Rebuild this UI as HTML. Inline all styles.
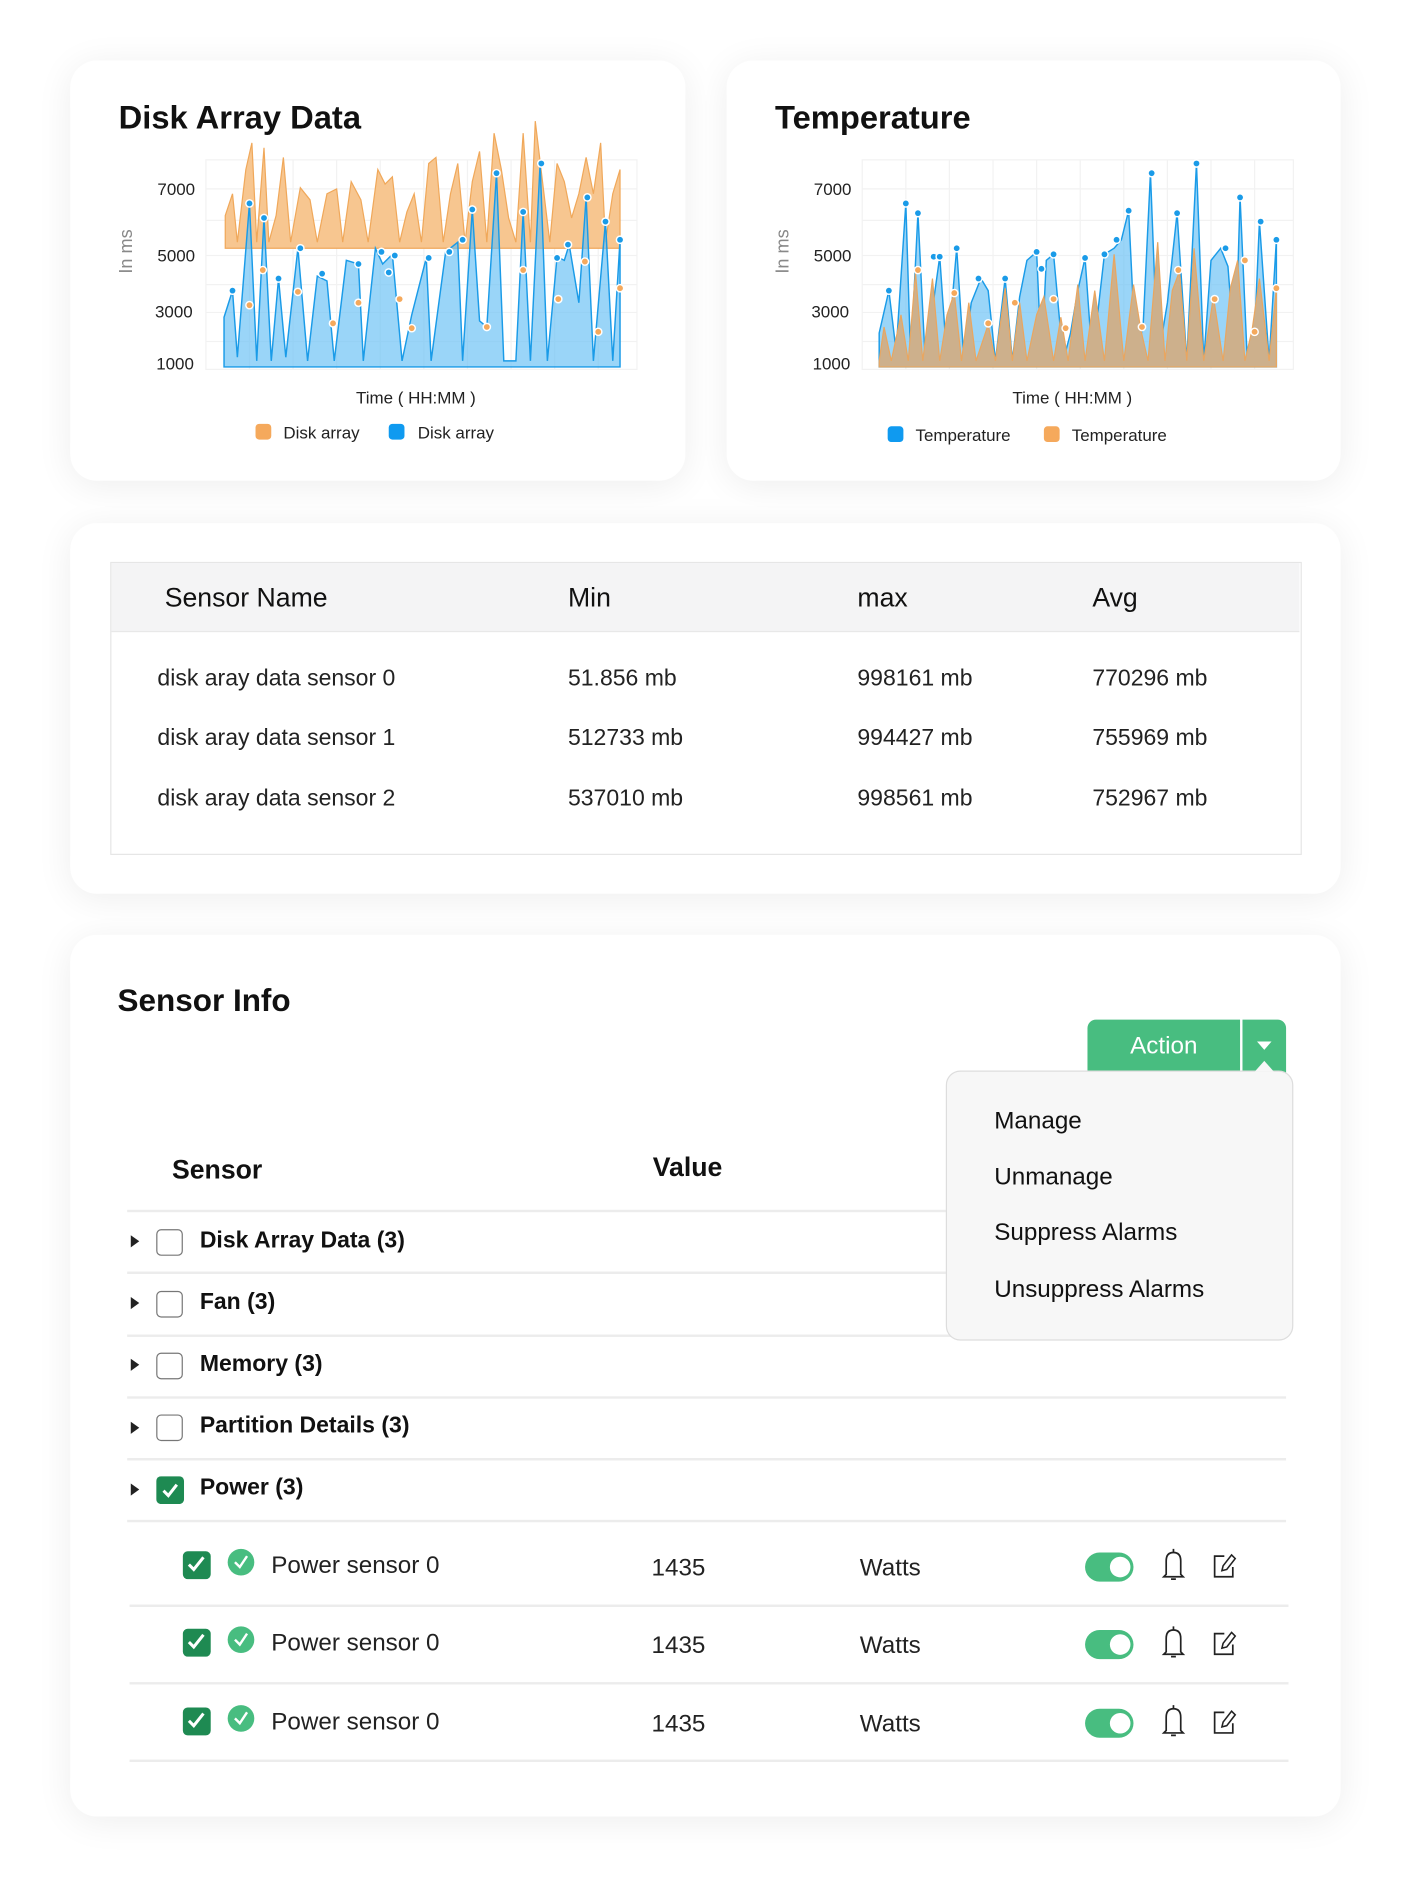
<!DOCTYPE html>
<html><head><meta charset="utf-8">
<style>
html,body{margin:0;padding:0;background:#fff;}
body{width:1412px;height:1898px;overflow:hidden;font-family:"Liberation Sans",sans-serif;color:#111;}
#w{position:absolute;left:0;top:0;width:1166px;height:1568px;transform:scale(1.2110);transform-origin:0 0;}
.card{position:absolute;background:#fff;border-radius:22px;box-shadow:0 4px 30px rgba(0,0,0,0.07);}
.abs{position:absolute;white-space:nowrap;}
.t{font-size:19px;color:#222;}
.rowline{position:absolute;left:105px;width:957px;height:2px;background:#ececec;}
.cb{position:absolute;width:20px;height:20px;border:1.5px solid #777;border-radius:4px;background:#fff;}
.caret{position:absolute;width:0;height:0;border-left:7px solid #222;border-top:5px solid transparent;border-bottom:5px solid transparent;}
.grp{position:absolute;font-size:19px;font-weight:bold;color:#111;}
</style></head><body>
<div id="w">

<div class="card" style="left:58px;top:50px;width:508px;height:347px;"></div>
<div class="card" style="left:600px;top:50px;width:507px;height:347px;"></div>
<div class="card" style="left:58px;top:432px;width:1049px;height:306px;"></div>
<div class="card" style="left:58px;top:772px;width:1049px;height:728px;"></div>

<div class="abs" style="left:98px;top:82px;font-size:27px;font-weight:bold;">Disk Array Data</div>
<div class="abs" style="left:640px;top:82px;font-size:27px;font-weight:bold;">Temperature</div>

<svg class="abs" style="left:0;top:0" width="1166" height="420">
<g stroke="#f2f2f2" stroke-width="1" fill="none">
<rect x="170" y="132" width="356" height="173"/>
<line x1="170" y1="156" x2="526" y2="156"/><line x1="170" y1="182" x2="526" y2="182"/><line x1="170" y1="211" x2="526" y2="211"/><line x1="170" y1="235" x2="526" y2="235"/><line x1="170" y1="258" x2="526" y2="258"/><line x1="170" y1="282" x2="526" y2="282"/>
<line x1="206" y1="132" x2="206" y2="305"/><line x1="242" y1="132" x2="242" y2="305"/><line x1="278" y1="132" x2="278" y2="305"/><line x1="314" y1="132" x2="314" y2="305"/><line x1="350" y1="132" x2="350" y2="305"/><line x1="386" y1="132" x2="386" y2="305"/><line x1="422" y1="132" x2="422" y2="305"/><line x1="458" y1="132" x2="458" y2="305"/><line x1="494" y1="132" x2="494" y2="305"/>
<rect x="712" y="132" width="356" height="173"/>
<line x1="712" y1="156" x2="1068" y2="156"/><line x1="712" y1="182" x2="1068" y2="182"/><line x1="712" y1="211" x2="1068" y2="211"/><line x1="712" y1="235" x2="1068" y2="235"/><line x1="712" y1="258" x2="1068" y2="258"/><line x1="712" y1="282" x2="1068" y2="282"/>
<line x1="748" y1="132" x2="748" y2="305"/><line x1="784" y1="132" x2="784" y2="305"/><line x1="820" y1="132" x2="820" y2="305"/><line x1="856" y1="132" x2="856" y2="305"/><line x1="892" y1="132" x2="892" y2="305"/><line x1="928" y1="132" x2="928" y2="305"/><line x1="964" y1="132" x2="964" y2="305"/><line x1="1000" y1="132" x2="1000" y2="305"/><line x1="1036" y1="132" x2="1036" y2="305"/>
</g>
<polygon fill="#f7c690" stroke="#f0a85a" stroke-width="1" points="186,205 186,178 192,160 196,200 203,140 208,118 212,200 218,122 222,200 228,178 234,130 240,200 248,155 256,165 262,200 270,160 278,156 283,200 290,150 298,165 304,200 312,140 318,152 324,146 330,200 336,175 342,160 348,200 354,135 360,130 366,200 372,160 378,135 384,200 390,150 396,125 402,200 408,110 414,140 420,180 426,200 432,110 438,200 442,100 448,150 454,200 460,135 466,150 472,180 478,160 484,130 490,160 496,118 500,200 506,160 512,140 512,205"/>
<polygon fill="rgba(100,190,245,0.65)" stroke="#1a9be8" stroke-width="1.2" points="185,303 185,262 192,240 196,295 206,168 212,298 218,180 224,298 230,230 236,295 246,205 254,298 262,228 270,232 276,298 286,215 296,218 300,298 310,205 316,218 324,210 332,298 340,260 352,213 356,298 368,208 378,200 382,298 390,173 396,265 402,270 410,143 416,298 426,298 432,175 438,298 446,135 452,298 460,212 466,215 470,202 478,250 484,163 490,298 500,183 506,298 512,198 512,303"/>
<g fill="#1a9be8" stroke="#fff" stroke-width="1.2">
<circle cx="192" cy="240" r="3"/><circle cx="206" cy="168" r="3"/><circle cx="218" cy="180" r="3"/><circle cx="230" cy="230" r="3"/><circle cx="248" cy="205" r="3"/><circle cx="266" cy="226" r="3"/><circle cx="296" cy="218" r="3"/><circle cx="315" cy="208" r="3"/><circle cx="321" cy="225" r="3"/><circle cx="326" cy="211" r="3"/><circle cx="354" cy="213" r="3"/><circle cx="371" cy="208" r="3"/><circle cx="382" cy="198" r="3"/><circle cx="390" cy="173" r="3"/><circle cx="410" cy="143" r="3"/><circle cx="432" cy="175" r="3"/><circle cx="447" cy="135" r="3"/><circle cx="460" cy="213" r="3"/><circle cx="469" cy="202" r="3"/><circle cx="485" cy="163" r="3"/><circle cx="500" cy="183" r="3"/><circle cx="512" cy="198" r="3"/>
</g>
<g fill="#f5a95c" stroke="#fff" stroke-width="1.2">
<circle cx="217" cy="223" r="3"/><circle cx="206" cy="252" r="3"/><circle cx="246" cy="241" r="3"/><circle cx="275" cy="267" r="3"/><circle cx="296" cy="250" r="3"/><circle cx="330" cy="247" r="3"/><circle cx="340" cy="271" r="3"/><circle cx="402" cy="270" r="3"/><circle cx="432" cy="223" r="3"/><circle cx="461" cy="247" r="3"/><circle cx="483" cy="216" r="3"/><circle cx="494" cy="274" r="3"/><circle cx="512" cy="238" r="3"/>
</g>
<polygon fill="rgba(100,190,245,0.65)" stroke="#1a9be8" stroke-width="1.2" points="726,303 726,275 734,240 740,290 748,168 752,298 758,176 764,298 770,255 776,212 782,298 790,205 796,298 802,250 810,230 816,240 822,298 830,230 836,298 842,245 848,215 856,208 860,298 864,215 870,210 878,298 884,275 890,240 896,213 902,298 912,210 920,205 926,198 932,174 938,298 944,268 950,143 956,298 964,250 972,176 980,298 988,135 994,298 1000,215 1008,205 1014,220 1020,298 1024,163 1030,298 1036,275 1040,183 1048,298 1054,198 1054,303"/>
<polygon fill="#cdb08c" stroke="#e9a660" stroke-width="1" points="726,303 726,298 730,270 736,298 744,260 750,298 756,225 762,298 770,230 776,298 782,260 788,242 794,298 800,250 806,298 816,268 822,298 830,238 836,298 842,250 848,298 856,260 862,245 870,298 876,262 882,298 890,235 896,298 904,240 912,298 920,210 928,298 936,235 942,272 948,298 956,200 962,298 968,240 974,224 980,298 986,205 994,298 1002,245 1010,298 1016,238 1022,215 1028,298 1034,272 1040,230 1048,298 1054,238 1054,303"/>
<g fill="#1a9be8" stroke="#fff" stroke-width="1.2">
<circle cx="734" cy="240" r="3"/><circle cx="748" cy="168" r="3"/><circle cx="758" cy="176" r="3"/><circle cx="771" cy="212" r="3"/><circle cx="776" cy="212" r="3"/><circle cx="790" cy="205" r="3"/><circle cx="808" cy="230" r="3"/><circle cx="830" cy="230" r="3"/><circle cx="856" cy="208" r="3"/><circle cx="860" cy="222" r="3"/><circle cx="870" cy="210" r="3"/><circle cx="896" cy="213" r="3"/><circle cx="912" cy="210" r="3"/><circle cx="922" cy="198" r="3"/><circle cx="932" cy="174" r="3"/><circle cx="951" cy="143" r="3"/><circle cx="972" cy="176" r="3"/><circle cx="988" cy="135" r="3"/><circle cx="1012" cy="205" r="3"/><circle cx="1024" cy="163" r="3"/><circle cx="1041" cy="183" r="3"/><circle cx="1054" cy="198" r="3"/>
</g>
<g fill="#f5a95c" stroke="#fff" stroke-width="1.2">
<circle cx="758" cy="223" r="3"/><circle cx="788" cy="242" r="3"/><circle cx="816" cy="267" r="3"/><circle cx="838" cy="250" r="3"/><circle cx="870" cy="247" r="3"/><circle cx="880" cy="271" r="3"/><circle cx="943" cy="270" r="3"/><circle cx="973" cy="223" r="3"/><circle cx="1003" cy="247" r="3"/><circle cx="1028" cy="215" r="3"/><circle cx="1036" cy="274" r="3"/><circle cx="1054" cy="238" r="3"/>
</g>
<g font-family="Liberation Sans,sans-serif" font-size="14" fill="#222">
<text x="130" y="161">7000</text><text x="130" y="216">5000</text><text x="128" y="262">3000</text><text x="129" y="305">1000</text>
<text x="672" y="161">7000</text><text x="672" y="216">5000</text><text x="670" y="262">3000</text><text x="671" y="305">1000</text>
<text x="294" y="333">Time ( HH:MM )</text><text x="836" y="333">Time ( HH:MM )</text>
<text x="234" y="362">Disk array</text><text x="345" y="362">Disk array</text>
<text x="756" y="364">Temperature</text><text x="885" y="364">Temperature</text>
</g>
<g font-family="Liberation Sans,sans-serif" font-size="15" fill="#888">
<text transform="translate(109,226) rotate(-90)">In ms</text>
<text transform="translate(651,226) rotate(-90)">In ms</text>
</g>
<rect x="211" y="350" width="13" height="13" rx="3" fill="#f5a95c"/>
<rect x="321" y="350" width="13" height="13" rx="3" fill="#0f9af0"/>
<rect x="733" y="352" width="13" height="13" rx="3" fill="#0f9af0"/>
<rect x="862" y="352" width="13" height="13" rx="3" fill="#f5a95c"/>
</svg>

<div class="abs" style="left:91px;top:464px;width:982px;height:240px;border:1px solid #e6e6e6;"></div>
<div class="abs" style="left:92px;top:465px;width:981px;height:56px;background:#f4f4f5;border-bottom:1px solid #e8e8e8;"></div>
<div class="abs" style="left:136px;top:481px;font-size:22px;">Sensor Name</div>
<div class="abs" style="left:469px;top:481px;font-size:22px;">Min</div>
<div class="abs" style="left:708px;top:481px;font-size:22px;">max</div>
<div class="abs" style="left:902px;top:481px;font-size:22px;">Avg</div>
<div class="abs t" style="left:130px;top:550px;">disk aray data sensor 0</div>
<div class="abs t" style="left:469px;top:550px;">51.856 mb</div>
<div class="abs t" style="left:708px;top:550px;">998161 mb</div>
<div class="abs t" style="left:902px;top:550px;">770296 mb</div>
<div class="abs t" style="left:130px;top:599px;">disk aray data sensor 1</div>
<div class="abs t" style="left:469px;top:599px;">512733 mb</div>
<div class="abs t" style="left:708px;top:599px;">994427 mb</div>
<div class="abs t" style="left:902px;top:599px;">755969 mb</div>
<div class="abs t" style="left:130px;top:649px;">disk aray data sensor 2</div>
<div class="abs t" style="left:469px;top:649px;">537010 mb</div>
<div class="abs t" style="left:708px;top:649px;">998561 mb</div>
<div class="abs t" style="left:902px;top:649px;">752967 mb</div>

<div class="abs" style="left:97px;top:811px;font-size:26px;font-weight:bold;">Sensor Info</div>
<div class="abs" style="left:142px;top:953px;font-size:22px;font-weight:bold;">Sensor</div>
<div class="abs" style="left:539px;top:951px;font-size:22px;font-weight:bold;">Value</div>

<div class="rowline" style="top:999px"></div>
<div class="rowline" style="top:1050px"></div>
<div class="rowline" style="top:1102px"></div>
<div class="rowline" style="top:1153px"></div>
<div class="rowline" style="top:1204px"></div>
<div class="rowline" style="top:1255px"></div>
<div class="rowline" style="top:1325px;left:107px;width:957px"></div>
<div class="rowline" style="top:1389px;left:107px;width:957px"></div>
<div class="rowline" style="top:1453px;left:107px;width:957px"></div>

<div class="caret" style="left:108px;top:1020px"></div><div class="cb" style="left:129px;top:1015px"></div><div class="grp" style="left:165px;top:1014px">Disk Array Data (3)</div>
<div class="caret" style="left:108px;top:1071px"></div><div class="cb" style="left:129px;top:1066px"></div><div class="grp" style="left:165px;top:1065px">Fan (3)</div>
<div class="caret" style="left:108px;top:1122px"></div><div class="cb" style="left:129px;top:1117px"></div><div class="grp" style="left:165px;top:1116px">Memory (3)</div>
<div class="caret" style="left:108px;top:1174px"></div><div class="cb" style="left:129px;top:1168px"></div><div class="grp" style="left:165px;top:1167px">Partition Details (3)</div>
<div class="caret" style="left:108px;top:1225px"></div>
<svg class="abs" style="left:129px;top:1219px" width="23" height="23"><rect x="0" y="0" width="23" height="23" rx="4" fill="#1e8a52"/><path d="M6 12 L10 16 L17 7" stroke="#fff" stroke-width="2.5" fill="none"/></svg>
<div class="grp" style="left:165px;top:1218px">Power (3)</div>

<svg class="abs" style="left:0;top:1270px" width="1166" height="180">
<g id="r">
<rect x="151" y="11" width="23" height="23" rx="4" fill="#1e8a52"/><path d="M156 22 L160 26 L168 16" stroke="#fff" stroke-width="2.5" fill="none"/>
<circle cx="199" cy="20" r="11" fill="#48bd80"/><path d="M194 20 L198 24 L204 15" stroke="#fff" stroke-width="2" fill="none"/>
<rect x="896" y="12" width="40" height="24" rx="12" fill="#48bd80"/><circle cx="925" cy="24" r="8.5" fill="#fff"/>
<path d="M963 30 L963 19 Q963 12 969 12 Q975 12 975 19 L975 30 L977 32 L961 32 Z" stroke="#222" stroke-width="1.4" fill="none"/><path d="M969 9 L969 12 M967 34 L971 34" stroke="#222" stroke-width="1.4"/>
<path d="M1011 15 L1003 15 L1003 32 L1018 32 L1018 24" stroke="#222" stroke-width="1.4" fill="none"/><path d="M1009 27 L1010 23 L1017 14 L1020 17 L1013 26 Z" stroke="#222" stroke-width="1.3" fill="none"/>
</g>
<use href="#r" y="64"/><use href="#r" y="129"/>
<g font-family="Liberation Sans,sans-serif" font-size="20" fill="#222">
<text x="224" y="29">Power sensor 0</text><text x="538" y="31">1435</text><text x="710" y="31">Watts</text>
<text x="224" y="93">Power sensor 0</text><text x="538" y="95">1435</text><text x="710" y="95">Watts</text>
<text x="224" y="158">Power sensor 0</text><text x="538" y="160">1435</text><text x="710" y="160">Watts</text>
</g>
</svg>

<div class="abs" style="left:898px;top:842px;width:126px;height:44px;background:#48bd80;border-radius:7px 0 0 0;color:#fff;font-size:20px;text-align:center;line-height:44px;">Action</div>
<div class="abs" style="left:1026px;top:842px;width:36px;height:44px;background:#48bd80;border-radius:0 7px 0 0;"></div>
<div class="abs" style="left:1038px;top:860px;width:0;height:0;border-top:7px solid #fff;border-left:6px solid transparent;border-right:6px solid transparent;"></div>
<div class="abs" style="left:781px;top:884px;width:285px;height:221px;background:#f7f7f7;border:1.5px solid #ddd;border-radius:12px;"></div>
<div class="abs" style="left:1036px;top:876px;width:0;height:0;border-bottom:9px solid #f7f7f7;border-left:8px solid transparent;border-right:8px solid transparent;"></div>
<div class="abs" style="left:821px;top:915px;font-size:20px;">Manage</div>
<div class="abs" style="left:821px;top:961px;font-size:20px;">Unmanage</div>
<div class="abs" style="left:821px;top:1007px;font-size:20px;">Suppress Alarms</div>
<div class="abs" style="left:821px;top:1054px;font-size:20px;">Unsuppress Alarms</div>

</div>
</body></html>
